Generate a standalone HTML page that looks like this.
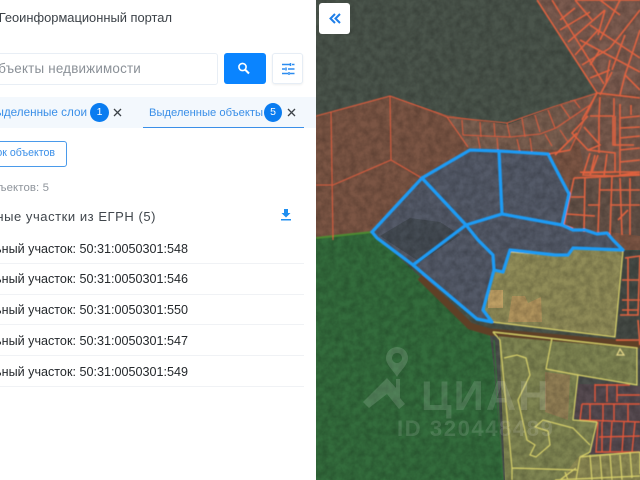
<!DOCTYPE html>
<html><head><meta charset="utf-8"><style>
html,body{margin:0;padding:0;width:640px;height:480px;overflow:hidden;background:#fff;font-family:"Liberation Sans",sans-serif}
.t{position:absolute;white-space:nowrap;}
#panel{position:absolute;left:0;top:0;width:316px;height:480px;background:#fff;overflow:hidden}
.row{position:absolute;left:0;width:304px;height:1px;background:#f0f2f5}
</style></head><body>
<svg style="position:absolute;left:316px;top:0" width="324" height="480" viewBox="316 0 324 480">
<defs>
<filter id="n" x="0" y="0" width="100%" height="100%"><feTurbulence type="fractalNoise" baseFrequency="0.14" numOctaves="3" seed="4"/><feColorMatrix values="0 0 0 0 0  0 0 0 0 0  0 0 0 0 0  0.9 0 0 0 -0.25"/></filter>
<filter id="b"><feGaussianBlur stdDeviation="0.45"/></filter>
</defs>
<rect x="316" y="0" width="324" height="480" fill="#4a544b"/>
<!-- brown fields -->
<polygon points="316,116 390,96 447,115 507,125 553,108 597,93 640,93 640,250 316,250" fill="#7b5544"/>
<polygon points="537,0 640,0 640,95 597,93" fill="#7d5c50"/>
<polygon points="447,117 507,125 553,108 597,93 570,150 468,148" fill="#7a5f50"/>
<polygon points="570,100 640,95 640,172 585,172" fill="#795a4d"/>
<polygon points="570,180 640,176 640,236 565,226" fill="#655248"/>
<polygon points="316,238 372,232 420,277 473,327 490,335 494,367 503,480 316,480" fill="#336c3c"/>
<polygon points="490,335 640,345 640,480 503,480 494,367" fill="#4c504d"/>
<!-- blue plots fill -->
<polygon points="470,150 499,151 548,154 569,193 562,225 573,230 597,234 607,233 623,250 573,248 568,255 510,250 503,272 494,270 483,310 492,322 477,319 413,265 372,232 422,178" fill="#545a68"/>
<polygon points="380,236 410,218 440,222 460,235 420,262" fill="#454c54"/>
<polygon points="510,250 568,255 573,248 623,250 615,337 492,322 483,310 494,270 503,272" fill="#908c58"/>
<rect x="488" y="290" width="15" height="18" fill="#bfa065"/>
<polygon points="508,322 512,296 525,296 528,303 541,297 542,322" fill="#b1945d"/>
<polygon points="499,335 637,348 637,385 578,375 573,420 597,422 590,452 578,470 512,468 512,480 505,480" fill="#7f8552"/>
<polygon points="512,466 580,468 570,480 512,480" fill="#7f8552"/>
<polygon points="545,372 570,375 568,420 545,412" fill="#927f55"/>
<polygon points="573,418 578,384 640,386 640,456 590,454 597,422" fill="#564a50"/>
<polygon points="580,455 640,452 640,480 560,480" fill="#8d8a54"/>
<polygon points="623,251 640,251 640,345 615,340" fill="#454a45"/>
<rect x="316" y="0" width="324" height="480" filter="url(#n)" opacity=".38"/>
<g filter="url(#b)">
<!-- road -->
<path d="M420,277 L470,326 L490,332 L640,345" fill="none" stroke="#5f4026" stroke-width="7"/>
<!-- green outline -->
<path d="M316,238 L372,232" stroke="#4e8a30" stroke-width="2" fill="none"/>
<path d="M494,340 L503,480" stroke="#2f7a36" stroke-width="1" fill="none"/>
<!-- red field lines -->
<g fill="none" stroke="#d85c3e" stroke-width="1.1">
<path d="M316,116 L390,96 L440,114 L447,117 L468,147"/>
<path d="M331,112 L333,240 M390,96 L391,160 L333,185 L316,185 M391,160 L420,177"/>
<path d="M447,117 L507,123 L553,107 L597,93 L570,150 L548,154"/>
<path d="M462,120 L463,135 M480,122 L481,137 M494,123 L495,137 M507,123 L510,137 M522,118 L525,137 M535,115 L540,132 M548,110 L555,128 M561,105 L570,118 M574,100 L580,108"/>
<path d="M463,135 L510,137 L540,134 L556,128 L590,105"/>
<path d="M478,137 L480,148 M497,138 L498,150 M517,139 L520,152 M530,138 L532,153 M545,134 L552,146 M560,130 L568,142"/>
</g>
<g fill="none" stroke="#e0623f" stroke-width="1.6">
<path d="M537,0 L597,93 M552,0 L604,84 M575,0 L592,20 M560,20 L575,8 M560,30 L590,12 M568,42 L605,10 M575,55 L598,30 M590,25 L640,58 M580,40 L640,72 M598,35 L605,10 M620,0 L600,40 M640,10 L610,48 M625,35 L612,70 M640,30 L625,75 M600,50 L590,65 M582,65 L610,48 M590,78 L610,70 M600,95 L612,72 M620,95 L625,75 M640,90 L625,75 M610,60 L606,82 M600,0 L620,15 M575,0 L640,0"/>
<path d="M597,93 L640,98 M582,120 L597,93 M590,116 L613,116 L613,145 L634,145 M600,97 L599,116 M614,98 L614,116 M588,116 L572,133 L588,150 L615,153 L615,172 L585,173 L580,172 M584,127 L600,145 L588,150 M599,116 L599,153 M615,116 L615,146 M620,104 L620,175 L640,172 M620,118 L640,116 M620,128 L640,127 M620,138 L640,136 M620,150 L640,148 M620,162 L640,160 M631,105 L631,115"/>
<path d="M590,153 L583,175 L615,176 L640,174 M595,155 L590,176 M607,154 L604,176 M598,155 L592,172 M582,172 L640,172 M570,150 L548,154 M577,133 L555,155"/>
<path d="M574,178 L640,175 M574,178 L564,225 L573,228 M571,197 L585,197 M567,214 L595,216 M585,178 L584,232 M600,178 L598,232 M612,176 L610,235 M620,178 L622,235 M630,178 L630,235 M640,190 L600,190 M610,205 L640,205 M588,205 L600,205 M618,220 L628,210"/>
<path d="M625,258 L640,256 L638,315 L620,315 M622,280 L640,280 M622,300 L640,300 M622,310 L638,310 M628,258 L628,315 M638,320 L640,345 M616,340 L640,340"/>
</g>
<g fill="none" stroke="#e2573a" stroke-width="1.4">
<path d="M595,384 L595,402 M607,384 L607,402 M617,384 L617,402 M595,385 L630,385 M617,395 L640,395 M582,404 L640,404 M582,404 L580,420 L640,422 M590,404 L590,422 M603,404 L603,422 M614,404 L614,422 M628,404 L628,422"/>
<path d="M598,422 L596,452 L640,452 M599,437 L640,436 M602,422 L602,452 M612,422 L610,452 M624,422 L622,452 M635,422 L632,452"/>
</g>
<!-- yellow -->
<g fill="none" stroke="#d9d26a" stroke-width="1.2">
<path d="M510,252 L568,256 L573,248 L623,251 L615,337 L492,322"/>
<path d="M493,332 L637,348 L637,385 L578,375 L573,420 L597,422"/>
<path d="M493,332 L500,340 L512,468 L577,470 M512,468 L512,480"/>
<path d="M552,338 L546,369 L578,375"/>
<path d="M504,358 L517,355 L526,358 L530,375 L518,400 L527,440 L535,445 L530,455 L536,457 L550,445 L548,431 L535,427 L543,420 L573,428 L590,445"/>
<path d="M597,422 L590,452 L580,457 L640,452 M580,457 L576,480 M590,455 L592,480 M600,455 L602,480 M610,455 L612,480 M620,455 L622,480 M630,452 L632,478 M640,452 L640,474 M576,468 L560,480 M565,472 L568,480 M555,480 L640,476"/>
</g>
<path d="M617,355 l3,-6 l4,6 z" fill="none" stroke="#e8d98a" stroke-width="1.2"/>
<!-- blue outline -->
<g fill="none" stroke="#1e9bf5" stroke-width="3.2" stroke-linejoin="round" stroke-linecap="round">
<path d="M470,150 L499,151 L548,154 L569,194 L562,225 L573,230 L585,230 L597,234 L607,233 L613,240 L623,250 L573,248 L568,255 L555,255 L510,250 L503,272 L494,270 L483,310 L492,322 L477,319 L413,265 L377,238 L372,232 L422,178 Z"/>
<path d="M422,178 L466,225 L478,240 L493,255 L494,270 M413,265 L466,225 L502,214 L499,151 M502,214 L562,225"/>
</g>
</g>
<!-- watermark -->
<g fill="#fff" opacity=".14">
<path fill-rule="evenodd" d="M397,347 a11,11 0 0 1 11,11 c0,7 -8,13 -11,19 c-3,-6 -11,-12 -11,-19 a11,11 0 0 1 11,-11 z M397,353 a5,5 0 1 0 .01,0 z"/>
<path d="M363,402 L387,378 L396,388 V379 H400 V398 L405,404 L399,409 L387,394 L369,408 Z"/>
<text x="421" y="410" font-family="Liberation Sans,sans-serif" font-weight="700" font-size="42" letter-spacing="2" opacity=".9">ЦИАН</text>
<text x="397" y="436" font-family="Liberation Sans,sans-serif" font-weight="700" font-size="22" letter-spacing="1.6" opacity=".85">ID 320448489</text>
</g>
</svg>
<div style="position:absolute;left:319px;top:3px;width:31px;height:31px;background:#fff;border-radius:3px"></div>
<svg style="position:absolute;left:319px;top:3px" width="31" height="31" viewBox="0 0 31 31"><path d="M16,11 L11.500,15.500 L16,20 M21,11 L16.500,15.500 L21,20" fill="none" stroke="#1e7ee8" stroke-width="2"/></svg>

<div id="panel">
<div class="t" style="right:144px;top:10px;font-size:12.900px;line-height:16px;color:#3c4248;">Геоинформационный портал</div>
<div style="position:absolute;left:-10px;top:53px;width:226px;height:30px;border:1px solid #e8eef5;border-radius:3px"></div>
<div class="t" style="right:175px;top:60px;font-size:13.400px;line-height:17px;color:#8a9097;letter-spacing:.2px">объекты недвижимости</div>
<div style="position:absolute;left:224px;top:53px;width:42px;height:31px;background:#0a84ff;border-radius:3px"></div>
<svg style="position:absolute;left:236px;top:62px" width="18" height="14" viewBox="0 0 18 14"><circle cx="6.500" cy="5" r="3.600" fill="none" stroke="#fff" stroke-width="1.600"/><path d="M9,7.500 L13,11.500" stroke="#fff" stroke-width="2"/></svg>
<div style="position:absolute;left:272px;top:53px;width:31px;height:31px;background:#fff;border:1px solid #e6edf5;border-radius:3px;box-sizing:border-box;box-shadow:0 1px 2px #0001"></div>
<svg style="position:absolute;left:280px;top:61px" width="16" height="16" viewBox="0 0 16 16"><path d="M2,3.500 H10 M12,3.500 H14.500 M2,8 H5 M8,8 H14.500 M2,12.500 H8 M10,12.500 H14.500" stroke="#2b8cf0" stroke-width="1.500" fill="none"/><path d="M10.500,2 V5 M6,6.500 V9.500 M9,11 V14" stroke="#2b8cf0" stroke-width="1.500"/></svg>

<div style="position:absolute;left:0;top:97px;width:316px;height:31px;background:#f3f8fd"></div>
<div style="position:absolute;left:143px;top:127px;width:161px;height:1px;background:#3a8fe8"></div>
<div class="t" style="right:229px;top:105px;font-size:11.700px;line-height:15px;color:#3a8fe8">Выделенные слои</div>
<div style="position:absolute;left:90px;top:103px;width:19px;height:19px;border-radius:50%;background:#0a7cf0;color:#fff;font-size:10.500px;line-height:19px;text-align:center">1</div>
<svg style="position:absolute;left:113px;top:108px" width="9" height="9" viewBox="0 0 9 9"><path d="M1,1 L8,8 M8,1 L1,8" stroke="#3c4248" stroke-width="1.300"/></svg>
<div class="t" style="left:149px;top:105.500px;font-size:11.200px;line-height:15px;color:#3a8fe8">Выделенные объекты</div>
<div style="position:absolute;left:264px;top:103px;width:18px;height:19px;border-radius:50%;background:#0a7cf0;color:#fff;font-size:10.500px;line-height:19px;text-align:center">5</div>
<svg style="position:absolute;left:287px;top:108px" width="9" height="9" viewBox="0 0 9 9"><path d="M1,1 L8,8 M8,1 L1,8" stroke="#3c4248" stroke-width="1.300"/></svg>

<div style="position:absolute;left:-20px;top:141px;width:85px;height:24px;border:1px solid #4a9aea;border-radius:3px"></div>
<div class="t" style="right:261px;top:146px;font-size:10.600px;line-height:14px;color:#3a8fe8">Список объектов</div>
<div class="t" style="right:267px;top:181px;font-size:11.400px;line-height:15px;color:#8f959c;letter-spacing:.1px">Объектов: 5</div>
<div class="t" style="right:160px;top:208px;font-size:13px;line-height:17px;color:#40464c;letter-spacing:.55px">Земельные участки из ЕГРН (5)</div>
<svg style="position:absolute;left:280px;top:208px" width="12" height="14" viewBox="0 0 12 14"><path d="M4,1 H8 V5 H10.500 L6,9.500 L1.500,5 H4 Z" fill="#1f8ff0"/><rect x="1" y="11" width="10" height="1.500" fill="#1f8ff0"/></svg>

<div class="t" style="right:128px;top:240.500px;font-size:12.600px;line-height:17px;color:#24282c">Земельный участок: 50:31:0050301:548</div>
<div class="row" style="top:263px"></div>
<div class="t" style="right:128px;top:271px;font-size:12.600px;line-height:17px;color:#24282c">Земельный участок: 50:31:0050301:546</div>
<div class="row" style="top:293.500px"></div>
<div class="t" style="right:128px;top:301.500px;font-size:12.600px;line-height:17px;color:#24282c">Земельный участок: 50:31:0050301:550</div>
<div class="row" style="top:324px"></div>
<div class="t" style="right:128px;top:332.500px;font-size:12.600px;line-height:17px;color:#24282c">Земельный участок: 50:31:0050301:547</div>
<div class="row" style="top:355px"></div>
<div class="t" style="right:128px;top:363.500px;font-size:12.600px;line-height:17px;color:#24282c">Земельный участок: 50:31:0050301:549</div>
<div class="row" style="top:386px"></div>
</div>
</body></html>
